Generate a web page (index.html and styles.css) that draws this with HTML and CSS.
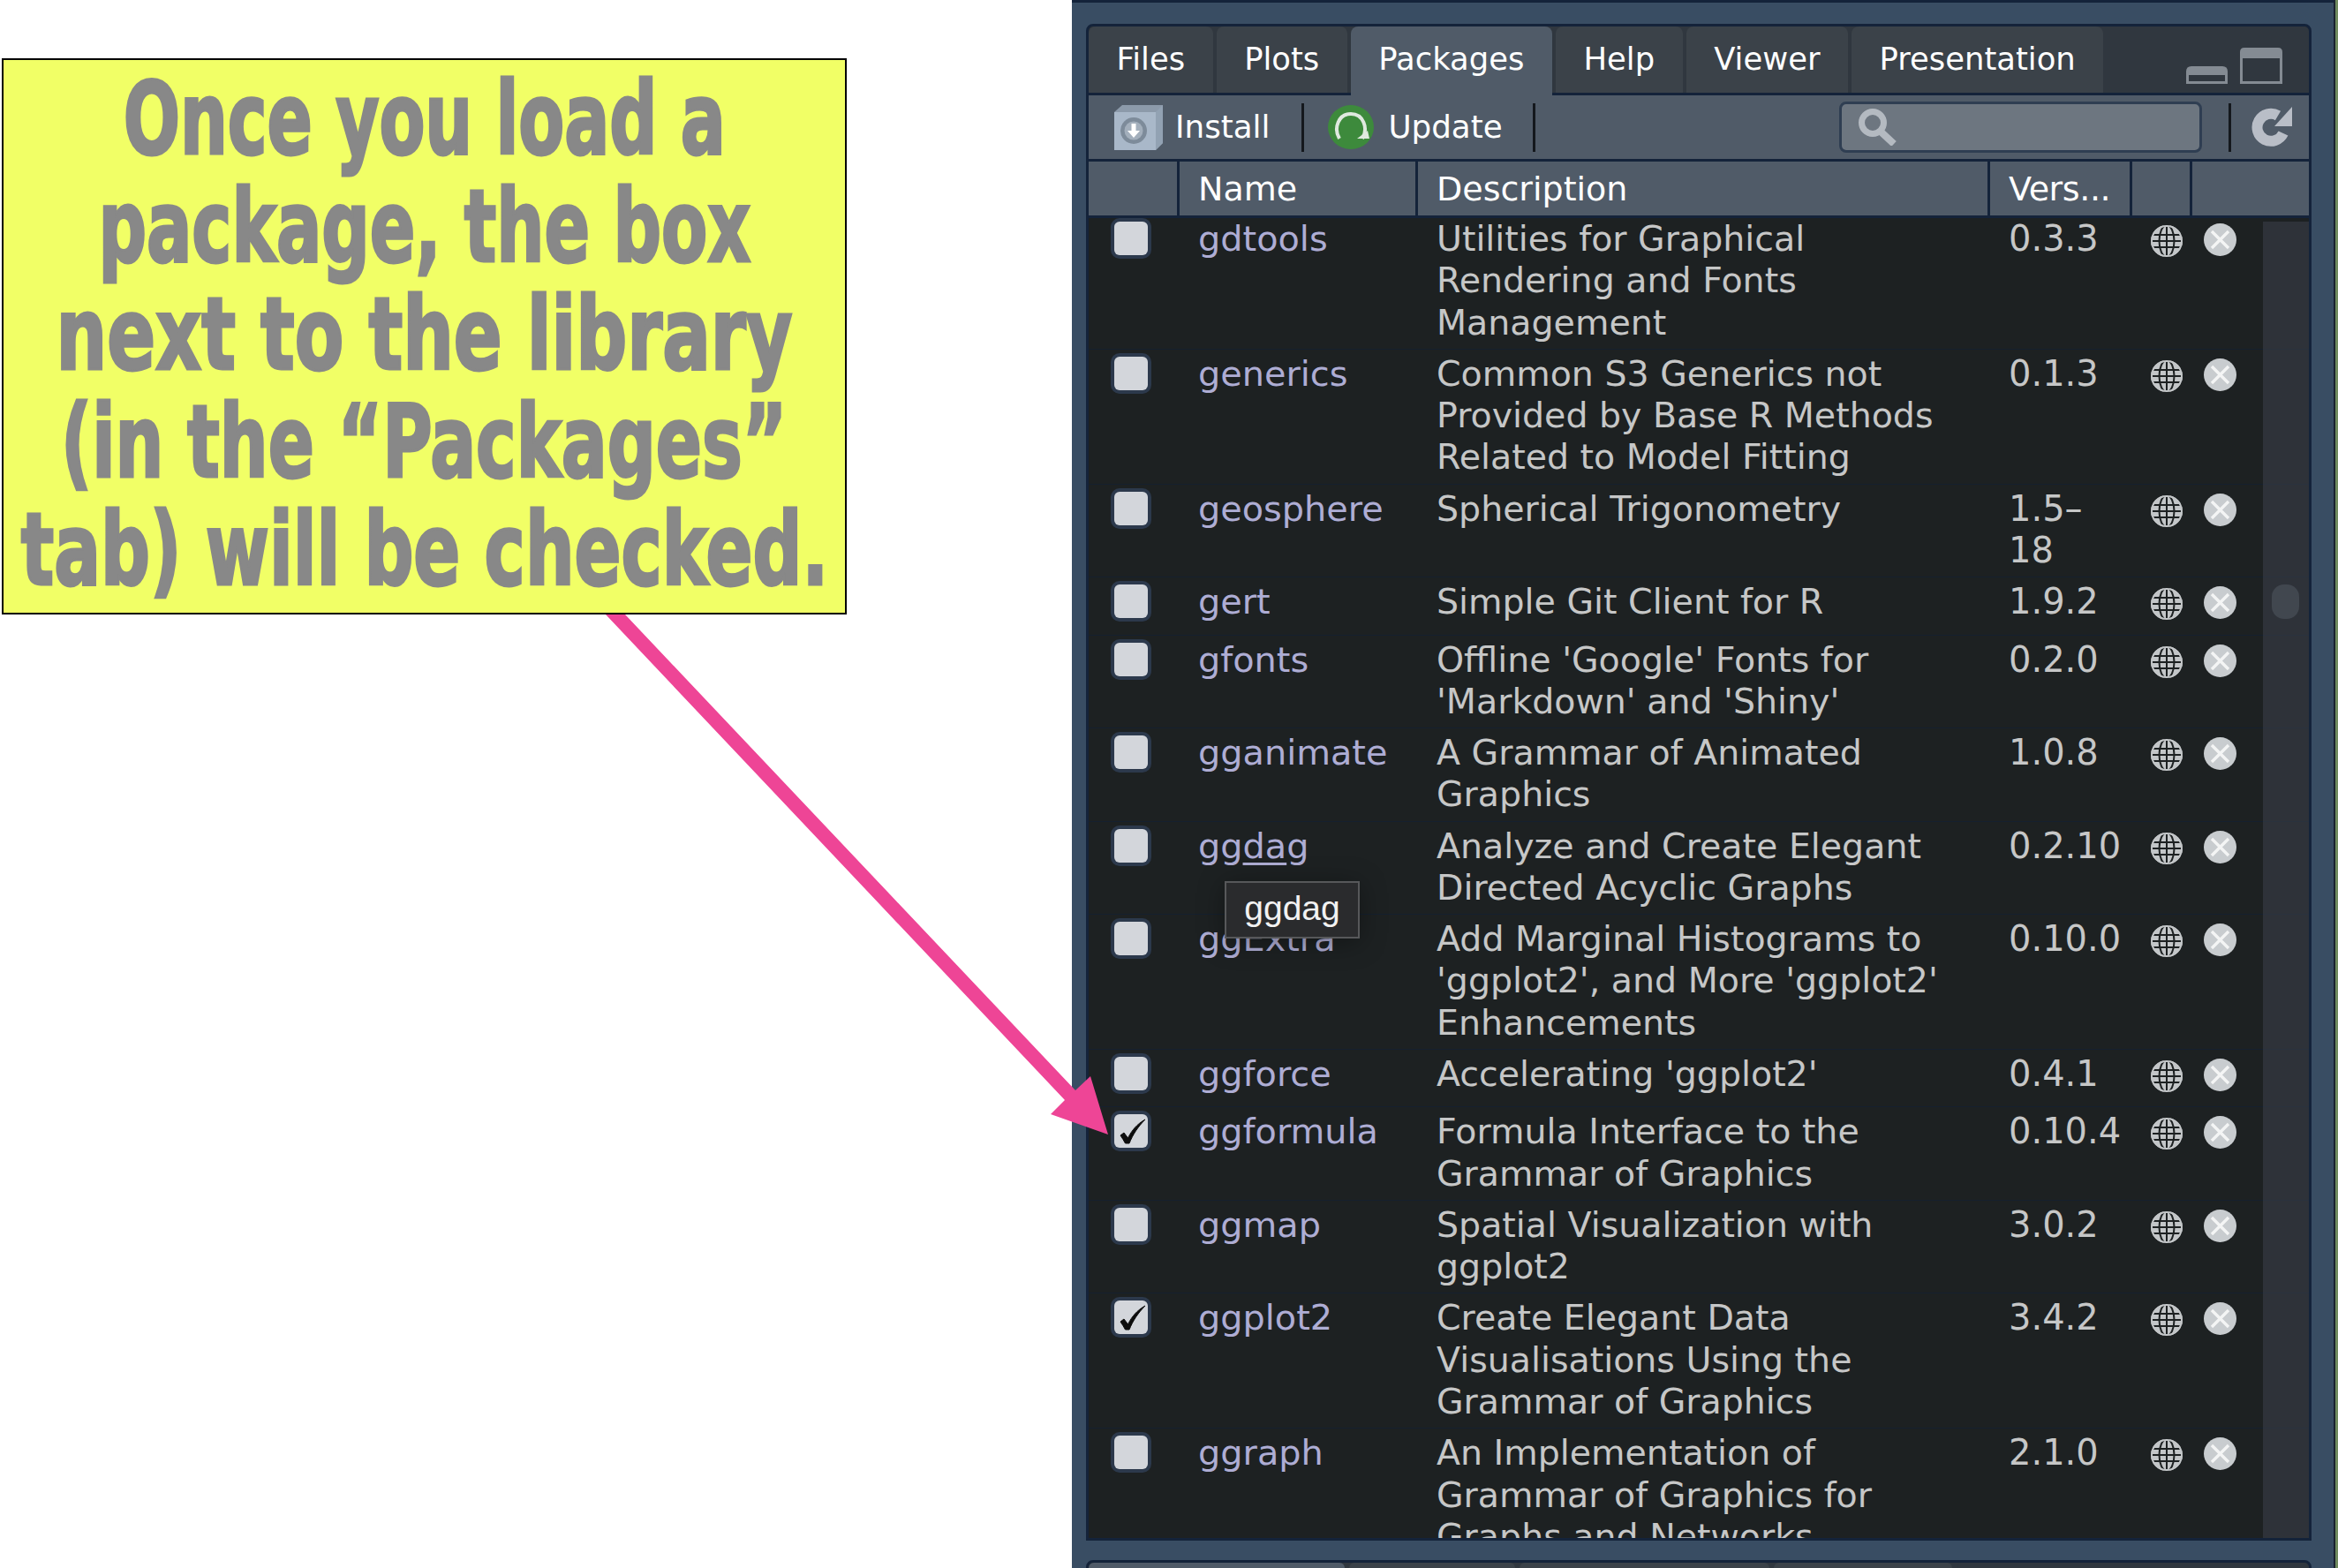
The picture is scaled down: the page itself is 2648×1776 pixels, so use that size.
FILE: index.html
```html
<!DOCTYPE html>
<html lang="en">
<head>
<meta charset="utf-8">
<title>Packages pane</title>
<link rel="stylesheet" href="styles.css">
</head>
<body>
<svg width="0" height="0" class="defs">
  <defs>
    <symbol id="globe" viewBox="0 0 36 36">
      <circle cx="18" cy="18" r="18" fill="#c3c6c8"/>
      <g fill="none" stroke="#1d2122" stroke-width="2">
        <path d="M0 11h36M0 18h36M0 25h36"/>
        <path d="M18 0v36"/>
        <ellipse cx="18" cy="18" rx="8.5" ry="18"/>
      </g>
      <circle cx="18" cy="18" r="17" fill="none" stroke="#c3c6c8" stroke-width="2"/>
    </symbol>
    <symbol id="remove" viewBox="0 0 37 37">
      <circle cx="18.5" cy="18.5" r="18.5" fill="#c8cccf"/>
      <path d="M9 9l19 19M28 9L9 28" stroke="#f4f5f5" stroke-width="3.4" fill="none"/>
    </symbol>
    <symbol id="tick" viewBox="0 0 38 38">
      <path d="M7 24l4-3 4.500 6C20 18 26 11 35 6 27 14 21 23 17 33h-4.500C11 30 9 27 7 24z" fill="#0d0d0d" stroke="#0d0d0d" stroke-width="1" stroke-linejoin="round"/>
    </symbol>
  </defs>
</svg>

<div class="page">
  <div class="left">
    <div class="note">
      <span class="note-line nl-1">Once you load a</span>
      <span class="note-line nl-2">package, the box</span>
      <span class="note-line nl-3">next to the library</span>
      <span class="note-line nl-4">(in the “Packages”</span>
      <span class="note-line nl-5">tab) will be checked.</span>
    </div>
  </div>

  <div class="panel">
    <div class="pane">
      <div class="tabs">
        <div class="tab">Files</div>
        <div class="tab">Plots</div>
        <div class="tab active">Packages</div>
        <div class="tab">Help</div>
        <div class="tab">Viewer</div>
        <div class="tab">Presentation</div>
        <div class="win-icons">
          <svg class="win-min" viewBox="0 0 47 20"><path d="M0 20V6q0-6 6-6h35q6 0 6 6v14z" fill="#848b93"/><rect x="3" y="10" width="41" height="7" fill="#30373f"/></svg>
          <svg class="win-max" viewBox="0 0 48 41"><path d="M0 41V5q0-5 5-5h38q5 0 5 5v36z" fill="#848b93"/><rect x="3" y="12" width="42" height="26" fill="#30373f"/></svg>
        </div>
      </div>

      <div class="toolbar">
        <svg class="ic-install" viewBox="0 0 55 51">
          <path d="M0 8L9 0h46v43l-8 8z" fill="#8c9aaa"/>
          <path d="M0 8h47v43H0z" fill="#a9b8c9"/>
          <path d="M47 8l8-8v43l-8 8z" fill="#92a2b3"/>
          <circle cx="22" cy="29" r="15" fill="#7d8b9a"/>
          <circle cx="22" cy="29" r="10.5" fill="#a3afbc"/>
          <path d="M19.500 21h5v8h4.500L22 37l-7-8h4.500z" fill="#fff"/>
        </svg>
        <span class="tool-label">Install</span>
        <span class="tool-sep sep-a"></span>
        <svg class="ic-update" viewBox="0 0 52 50">
          <ellipse cx="26" cy="25" rx="26" ry="25" fill="#3d8a3c"/>
          <path d="M13 38C6 26 12 10 26 10s20 16 13 28" fill="none" stroke="#dfe9df" stroke-width="4"/>
          <path d="M33 38h14l-2-9z" fill="#dfe9df"/>
        </svg>
        <span class="tool-label">Update</span>
        <span class="tool-sep sep-b"></span>
        <div class="search">
          <svg class="ic-search" viewBox="0 0 45 42">
            <circle cx="17" cy="16" r="12.500" fill="none" stroke="#b4bac1" stroke-width="7"/>
            <path d="M26 26l15 14" stroke="#b4bac1" stroke-width="8" fill="none"/>
          </svg>
        </div>
        <span class="tool-sep sep-c"></span>
        <svg class="ic-refresh" viewBox="0 0 46 50">
          <path d="M36 32A15.500 15.500 0 1 1 30 12" fill="none" stroke="#b9bec7" stroke-width="12"/>
          <path d="M46 2v22H26z" fill="#b9bec7"/>
        </svg>
      </div>

      <div class="head">
        <div class="hc hc-check"></div>
        <div class="hc hc-name">Name</div>
        <div class="hc hc-desc">Description</div>
        <div class="hc hc-vers">Vers...</div>
        <div class="hc hc-web"></div>
        <div class="hc hc-del"></div>
      </div>

      <div class="body">
        <div class="list">
          <div class="row"><div class="c-check"><span class="box"></span></div><div class="c-name">gdtools</div><div class="c-desc">Utilities for Graphical<br>Rendering and Fonts<br>Management</div><div class="c-vers">0.3.3</div><div class="c-web"><svg class="globe"><use href="#globe"/></svg></div><div class="c-del"><svg class="remove"><use href="#remove"/></svg></div></div>
          <div class="row"><div class="c-check"><span class="box"></span></div><div class="c-name">generics</div><div class="c-desc">Common S3 Generics not<br>Provided by Base R Methods<br>Related to Model Fitting</div><div class="c-vers">0.1.3</div><div class="c-web"><svg class="globe"><use href="#globe"/></svg></div><div class="c-del"><svg class="remove"><use href="#remove"/></svg></div></div>
          <div class="row"><div class="c-check"><span class="box"></span></div><div class="c-name">geosphere</div><div class="c-desc">Spherical Trigonometry</div><div class="c-vers">1.5–<br>18</div><div class="c-web"><svg class="globe"><use href="#globe"/></svg></div><div class="c-del"><svg class="remove"><use href="#remove"/></svg></div></div>
          <div class="row"><div class="c-check"><span class="box"></span></div><div class="c-name">gert</div><div class="c-desc">Simple Git Client for R</div><div class="c-vers">1.9.2</div><div class="c-web"><svg class="globe"><use href="#globe"/></svg></div><div class="c-del"><svg class="remove"><use href="#remove"/></svg></div></div>
          <div class="row"><div class="c-check"><span class="box"></span></div><div class="c-name">gfonts</div><div class="c-desc">Offline 'Google' Fonts for<br>'Markdown' and 'Shiny'</div><div class="c-vers">0.2.0</div><div class="c-web"><svg class="globe"><use href="#globe"/></svg></div><div class="c-del"><svg class="remove"><use href="#remove"/></svg></div></div>
          <div class="row"><div class="c-check"><span class="box"></span></div><div class="c-name">gganimate</div><div class="c-desc">A Grammar of Animated<br>Graphics</div><div class="c-vers">1.0.8</div><div class="c-web"><svg class="globe"><use href="#globe"/></svg></div><div class="c-del"><svg class="remove"><use href="#remove"/></svg></div></div>
          <div class="row"><div class="c-check"><span class="box"></span></div><div class="c-name">gg<span class="hovered">da</span>g</div><div class="c-desc">Analyze and Create Elegant<br>Directed Acyclic Graphs</div><div class="c-vers">0.2.10</div><div class="c-web"><svg class="globe"><use href="#globe"/></svg></div><div class="c-del"><svg class="remove"><use href="#remove"/></svg></div></div>
          <div class="row"><div class="c-check"><span class="box"></span></div><div class="c-name">ggExtra</div><div class="c-desc">Add Marginal Histograms to<br>'ggplot2', and More 'ggplot2'<br>Enhancements</div><div class="c-vers">0.10.0</div><div class="c-web"><svg class="globe"><use href="#globe"/></svg></div><div class="c-del"><svg class="remove"><use href="#remove"/></svg></div></div>
          <div class="row"><div class="c-check"><span class="box"></span></div><div class="c-name">ggforce</div><div class="c-desc">Accelerating 'ggplot2'</div><div class="c-vers">0.4.1</div><div class="c-web"><svg class="globe"><use href="#globe"/></svg></div><div class="c-del"><svg class="remove"><use href="#remove"/></svg></div></div>
          <div class="row"><div class="c-check"><span class="box"><svg class="tick"><use href="#tick"/></svg></span></div><div class="c-name">ggformula</div><div class="c-desc">Formula Interface to the<br>Grammar of Graphics</div><div class="c-vers">0.10.4</div><div class="c-web"><svg class="globe"><use href="#globe"/></svg></div><div class="c-del"><svg class="remove"><use href="#remove"/></svg></div></div>
          <div class="row"><div class="c-check"><span class="box"></span></div><div class="c-name">ggmap</div><div class="c-desc">Spatial Visualization with<br>ggplot2</div><div class="c-vers">3.0.2</div><div class="c-web"><svg class="globe"><use href="#globe"/></svg></div><div class="c-del"><svg class="remove"><use href="#remove"/></svg></div></div>
          <div class="row"><div class="c-check"><span class="box"><svg class="tick"><use href="#tick"/></svg></span></div><div class="c-name">ggplot2</div><div class="c-desc">Create Elegant Data<br>Visualisations Using the<br>Grammar of Graphics</div><div class="c-vers">3.4.2</div><div class="c-web"><svg class="globe"><use href="#globe"/></svg></div><div class="c-del"><svg class="remove"><use href="#remove"/></svg></div></div>
          <div class="row"><div class="c-check"><span class="box"></span></div><div class="c-name">ggraph</div><div class="c-desc">An Implementation of<br>Grammar of Graphics for<br>Graphs and Networks</div><div class="c-vers">2.1.0</div><div class="c-web"><svg class="globe"><use href="#globe"/></svg></div><div class="c-del"><svg class="remove"><use href="#remove"/></svg></div></div>
        </div>
        <div class="track"><span class="thumb"></span></div>
        <div class="tooltip">ggdag</div>
      </div>
    </div>

    <div class="next-tabs">
      <span class="nt nt-1"></span>
      <span class="nt nt-2"></span>
      <span class="nt nt-3"></span>
      <span class="nt nt-4"></span>
      <span class="nt nt-5"></span>
    </div>
  </div>
  <div class="edge"></div>
</div>

<svg class="arrow" viewBox="0 0 2648 1776">
  <path d="M686 696h22l510 539 17-16 20 66-65-23 16-16z" fill="#ee4596"/>
</svg>
</body>
</html>
```
FILE: styles.css
```css
* { box-sizing: border-box; }
html, body { margin: 0; padding: 0; }
body {
  width: 2648px;
  height: 1776px;
  overflow: hidden;
  background: #fff;
  font-family: "DejaVu Sans", "Liberation Sans", sans-serif;
  position: relative;
}
.defs { position: absolute; }
.page { display: flex; width: 2648px; height: 1776px; }

/* left note */
.left { width: 1214px; flex: none; padding: 66px 0 0 2px; }
.note {
  width: 957px;
  height: 630px;
  background: #f1ff66;
  border: 2px solid #000;
  display: flex;
  flex-direction: column;
  align-items: center;
  padding-top: 6px;
  color: #888888;
  font-family: "DejaVu Sans Condensed", "Liberation Sans", sans-serif;
  font-weight: 700;
  font-size: 114px;
  line-height: 122px;
  -webkit-text-stroke: 3px #888888;
}
.note-line { display: block; white-space: nowrap; flex: none; }
.nl-1 { transform: scaleX(0.737); }
.nl-2 { transform: scaleX(0.742); }
.nl-3 { transform: scaleX(0.789); }
.nl-4 { transform: scaleX(0.750); }
.nl-5 { transform: scaleX(0.762); }

/* panel */
.panel {
  width: 1429px;
  flex: none;
  height: 1776px;
  background: #394d63;
  border-top: 3px solid #14233a;
  padding: 24px 25px 0 16px;
  overflow: hidden;
}
.edge { flex: 1; background: #6f8a5e; border-left: 2px solid #1a2230; }
.pane {
  height: 1718px;
  width: 1388px;
  border: 3px solid #14233a;
  border-radius: 8px 8px 0 0;
  background: #1d2122;
  display: flex;
  flex-direction: column;
  overflow: hidden;
}

/* tabs */
.tabs {
  height: 78px;
  flex: none;
  background: #30373f;
  border-bottom: 3px solid #14233a;
  display: flex;
  gap: 4px;
  padding-right: 30px;
}
.tab {
  height: 75px;
  padding: 0 31.500px;
  background: #3b4249;
  color: #fff;
  font-size: 35.4px;
  line-height: 73px;
  border-radius: 8px 8px 0 0;
}
.tab.active { background: #505b68; height: 78px; position: relative; }
.win-icons { margin-left: auto; display: flex; align-items: flex-end; gap: 14px; padding-bottom: 10px; }
.win-min { width: 47px; height: 20px; }
.win-max { width: 48px; height: 41px; }

/* toolbar */
.toolbar {
  height: 75px;
  flex: none;
  background: #505b68;
  border-bottom: 3px solid #14233a;
  display: flex;
  align-items: center;
  padding-left: 29px;
  color: #fff;
  font-size: 35.7px;
}
.ic-install { width: 55px; height: 51px; margin-right: 14px; flex: none; }
.ic-update { width: 52px; height: 50px; margin-right: 16px; flex: none; }
.tool-label { line-height: 72px; }
.tool-sep { width: 3px; height: 55px; background: #14181d; flex: none; }
.sep-a { margin: 0 27px 0 36px; }
.sep-b { margin: 0 0 0 34px; }
.search {
  width: 411px;
  height: 58px;
  margin-left: 344px;
  flex: none;
  background: #6d7680;
  border: 3px solid #2f3e52;
  border-radius: 8px;
  display: flex;
  align-items: center;
  padding-left: 18px;
}
.ic-search { width: 45px; height: 42px; }
.sep-c { margin: 0 23px 0 30px; }
.ic-refresh { width: 46px; height: 50px; flex: none; }

/* header */
.head {
  height: 64px;
  flex: none;
  display: flex;
  background: #14233a;
  gap: 3px;
  padding-bottom: 3px;
}
.hc {
  background: #505b68;
  color: #fff;
  font-size: 38px;
  line-height: 62px;
}
.hc-check { width: 100px; }
.hc-name { width: 267px; padding-left: 21px; }
.hc-desc { width: 645px; padding-left: 21px; }
.hc-vers { width: 158px; padding-left: 21px; letter-spacing: -0.4px; }
.hc-web { width: 65px; }
.hc-del { flex: 1; }

/* body */
.body { flex: 1; position: relative; overflow: hidden; min-height: 0; }
.list { margin-top: -4px; }
.row {
  display: flex;
  min-height: 65.6px;
  padding: 4px 0 5.900px;
  border-bottom: 1px solid #15202e;
  font-size: 40px;
  line-height: 47.3px;
}
.c-check { width: 103px; flex: none; padding: 4px 0 0 29px; }
.box {
  display: block;
  width: 38px;
  height: 38px;
  background: #d3d6db;
  border-radius: 6px;
  box-shadow: 0 0 0 4px #2c394c;
}
.tick { display: block; width: 38px; height: 38px; }
.c-name { width: 270px; flex: none; padding-left: 21px; color: #aeadd4; font-size: 39.8px; }
.hovered { text-decoration: underline; text-decoration-thickness: 3px; text-underline-offset: 5px; }
.c-desc { width: 648px; flex: none; padding-left: 21px; color: #c6c7c7; white-space: nowrap; font-size: 39.5px; }
.c-vers { width: 161px; flex: none; padding-left: 21px; color: #c6c7c7; }
.c-web { width: 68px; flex: none; padding: 8px 0 0 21px; }
.c-del { flex: 1; padding: 6px 0 0 13px; }
.globe { display: block; width: 36px; height: 36px; }
.remove { display: block; width: 37px; height: 37px; }

.track {
  position: absolute;
  top: 4px;
  right: 0;
  bottom: 0;
  width: 52px;
  background: rgba(60, 66, 76, 0.55);
  padding: 411px 0 0 10px;
}
.thumb { display: block; width: 31px; height: 39px; background: #41474f; border-radius: 14px; }

.tooltip {
  position: absolute;
  left: 154px;
  top: 751px;
  width: 153px;
  height: 65px;
  background: #2a2b2d;
  border: 2px solid #57585a;
  color: #f2f2f2;
  font-family: "Liberation Sans", sans-serif;
  font-size: 39px;
  line-height: 58px;
  text-align: center;
  box-shadow: 0 4px 30px rgba(0, 0, 0, 0.35);
}

/* next pane */
.next-tabs {
  margin-top: 22px;
  height: 30px;
  width: 1388px;
  background: #30373f;
  border: 3px solid #14233a;
  border-radius: 8px 8px 0 0;
  display: flex;
  gap: 5px;
}
.nt { background: #3b4249; border-radius: 6px 6px 0 0; }
.nt-1 { width: 290px; background: #505b68; }
.nt-2 { width: 188px; }
.nt-3 { width: 283px; }
.nt-4 { width: 202px; }
.nt-5 { flex: 1; background: #30373f; }

.arrow { position: absolute; left: 0; top: 0; width: 2648px; height: 1776px; pointer-events: none; }
```
